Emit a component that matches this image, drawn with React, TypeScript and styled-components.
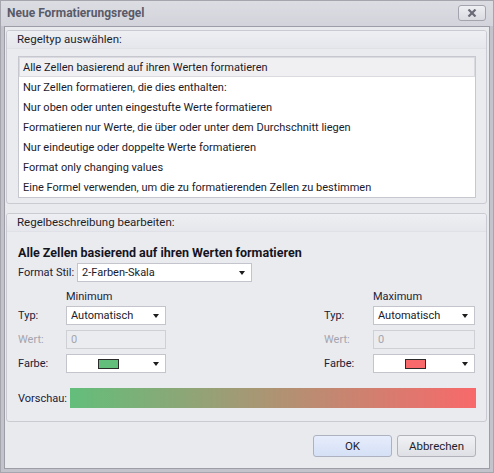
import React from "react";
import styled, {createGlobalStyle} from "styled-components";

const Global = createGlobalStyle`
  html, body {
    margin: 0;
    padding: 0;
    background: #e9eaee;
  }
  * {
    box-sizing: border-box;
  }
`;

const FONT = `Roboto, "Liberation Sans", Arial, sans-serif`;

const Window = styled.div`
  width: 494px;
  height: 473px;
  display: flex;
  flex-direction: column;
  background: #c3c4cb;
  border: 1px solid #a4a5ad;
  padding: 0 3px 3px 3px;
  font-family: ${FONT};
  font-size: 11px;
  line-height: 15px;
  color: #1e1e2c;
`;

const TitleBar = styled.div`
  height: 25px;
  display: flex;
  align-items: center;
  justify-content: space-between;
  background: linear-gradient(#dcdde3, #d3d4db);
  margin: 0 -3px;
  padding-left: 6px;
  padding-right: 7px;
`;

const Title = styled.span`
  font-weight: bold;
  font-size: 12px;
  color: #595a68;
`;

const CloseButton = styled.div`
  width: 28px;
  height: 16px;
  border: 1px solid #a3a4ad;
  border-radius: 3px;
  background: linear-gradient(#eeeff2, #dadbe1);
  display: flex;
  align-items: center;
  justify-content: center;
  margin-top: -2px;
`;

const Body = styled.div`
  flex: 1;
  display: flex;
  flex-direction: column;
  background: #e9eaee;
  border: 1px solid #9c9da6;
  padding: 3px 2px 0 1px;
`;

const Group = styled.div<{ $height: number }>`
  height: ${p => p.$height}px;
  display: flex;
  flex-direction: column;
  border: 1px solid #cacbd2;
  border-radius: 3px;
  background: #eaebef;
  overflow: hidden;
  & + & {
    margin-top: 9px;
  }
`;

const GroupHeader = styled.div`
  height: 18px;
  flex: none;
  display: flex;
  align-items: center;
  padding-left: 10px;
  font-size: 11.5px;
  background: linear-gradient(#eeeff3, #e6e7ec);
  border-bottom: 1px solid #e0e1e6;
  color: #1e1e2c;
`;

const GroupContent = styled.div`
  flex: 1;
  display: flex;
  flex-direction: column;
  padding: 7px 10px 5px 11px;
`;

const ListBox = styled.div`
  flex: 1;
  background: #ffffff;
  border: 1px solid #c7c8cf;
  display: flex;
  flex-direction: column;
`;

const ListItem = styled.div<{ $selected?: boolean }>`
  height: 20px;
  display: flex;
  align-items: center;
  padding-left: 3px;
  white-space: nowrap;
  background: ${p => (p.$selected ? "#f0f0f3" : "transparent")};
  border: 1px solid ${p => (p.$selected ? "#dadbe0" : "transparent")};
  color: #1a1a2a;
`;

const BoldTitle = styled.div`
  font-weight: bold;
  font-size: 12.5px;
  margin-top: 6px;
  color: #14141f;
`;

const StyleRow = styled.div`
  display: flex;
  align-items: center;
  margin-top: 3px;
  gap: 3px;
`;

const Columns = styled.div`
  display: flex;
  justify-content: space-between;
  margin-top: 7px;
  padding-right: 1px;
`;

const Column = styled.div<{ $label: number; $field: number }>`
  display: grid;
  grid-template-columns: ${p => p.$label}px ${p => p.$field}px;
  row-gap: 5px;
  align-items: center;
`;

const ColumnHeading = styled.div`
  grid-column: 2;
  color: #222238;
  margin-bottom: -3px;
`;

const Label = styled.div<{ $disabled?: boolean }>`
  color: ${p => (p.$disabled ? "#a4a5ae" : "#202038")};
`;

const Field = styled.div<{ $width?: number; $disabled?: boolean }>`
  width: ${p => (p.$width ? `${p.$width}px` : "auto")};
  height: 19px;
  border: 1px solid ${p => (p.$disabled ? "#cfd0d6" : "#c4c5cc")};
  background: ${p => (p.$disabled ? "#ebecf0" : "#ffffff")};
  color: ${p => (p.$disabled ? "#a4a5ae" : "#1a1a2a")};
  display: flex;
  align-items: center;
  padding: 0 4px;
`;

const FieldText = styled.span`
  flex: 1;
  white-space: nowrap;
`;

const Arrow = styled.span`
  width: 0;
  height: 0;
  border-left: 3.5px solid transparent;
  border-right: 3.5px solid transparent;
  border-top: 4px solid #1c1c1c;
  margin-right: 2px;
`;

const Swatch = styled.span<{ $color: string }>`
  width: 21px;
  height: 10px;
  margin-left: 27px;
  margin-right: auto;
  background: ${p => p.$color};
  border: 1px solid #2b2b2b;
`;

const PreviewRow = styled.div`
  display: flex;
  align-items: center;
  margin-top: 15px;
  gap: 3px;
`;

const PreviewBar = styled.div`
  flex: 1;
  height: 20px;
  background: linear-gradient(90deg, #63be7b, #f8696b);
`;

const Footer = styled.div`
  display: flex;
  justify-content: flex-end;
  gap: 5px;
  padding: 13px 11px 0 0;
`;

const Button = styled.div<{ $primary?: boolean }>`
  width: 79px;
  height: 22px;
  border: 1px solid ${p => (p.$primary ? "#aeb2c0" : "#b1b2ba")};
  border-radius: 3px;
  display: flex;
  align-items: center;
  justify-content: center;
  font-size: 11.5px;
  background: ${p =>
    p.$primary
      ? "linear-gradient(#e6edfb, #d5e0f6)"
      : "linear-gradient(#f1f2f5, #dfe0e5)"};
  color: #1e1e2c;
`;

const rules = [
  "Alle Zellen basierend auf ihren Werten formatieren",
  "Nur Zellen formatieren, die dies enthalten:",
  "Nur oben oder unten eingestufte Werte formatieren",
  "Formatieren nur Werte, die über oder unter dem Durchschnitt liegen",
  "Nur eindeutige oder doppelte Werte formatieren",
  "Format only changing values",
  "Eine Formel verwenden, um die zu formatierenden Zellen zu bestimmen",
];

interface BoundProps {
  heading: string;
  color: string;
  label: number;
  field: number;
}

const BoundColumn = ({heading, color, label, field}: BoundProps) => (
  <Column $label={label} $field={field}>
    <ColumnHeading>{heading}</ColumnHeading>
    <Label>Typ:</Label>
    <Field>
      <FieldText>Automatisch</FieldText>
      <Arrow/>
    </Field>
    <Label $disabled>Wert:</Label>
    <Field $disabled>
      <FieldText>0</FieldText>
    </Field>
    <Label>Farbe:</Label>
    <Field>
      <Swatch $color={color}/>
      <Arrow/>
    </Field>
  </Column>
);

export default function App() {
  return (
    <>
      <Global/>
      <Window>
        <TitleBar>
          <Title>Neue Formatierungsregel</Title>
          <CloseButton>
            <svg width="10" height="8" viewBox="0 0 10 8">
              <path d="M1.5 0.5 L8.5 7.5 M8.5 0.5 L1.5 7.5" stroke="#6b6c78" strokeWidth="2.2"/>
            </svg>
          </CloseButton>
        </TitleBar>
        <Body>
          <Group $height={174}>
            <GroupHeader>Regeltyp auswählen:</GroupHeader>
            <GroupContent>
              <ListBox>
                {rules.map((r, i) => (
                  <ListItem key={r} $selected={i === 0}>{r}</ListItem>
                ))}
              </ListBox>
            </GroupContent>
          </Group>
          <Group $height={209}>
            <GroupHeader>Regelbeschreibung bearbeiten:</GroupHeader>
            <GroupContent>
              <BoldTitle>Alle Zellen basierend auf ihren Werten formatieren</BoldTitle>
              <StyleRow>
                <Label>Format Stil:</Label>
                <Field $width={175}>
                  <FieldText>2-Farben-Skala</FieldText>
                  <Arrow/>
                </Field>
              </StyleRow>
              <Columns>
                <BoundColumn heading="Minimum" color="#63be7b" label={48} field={100}/>
                <BoundColumn heading="Maximum" color="#f8696b" label={49} field={102}/>
              </Columns>
              <PreviewRow>
                <Label>Vorschau:</Label>
                <PreviewBar/>
              </PreviewRow>
            </GroupContent>
          </Group>
          <Footer>
            <Button $primary>OK</Button>
            <Button>Abbrechen</Button>
          </Footer>
        </Body>
      </Window>
    </>
  );
}
